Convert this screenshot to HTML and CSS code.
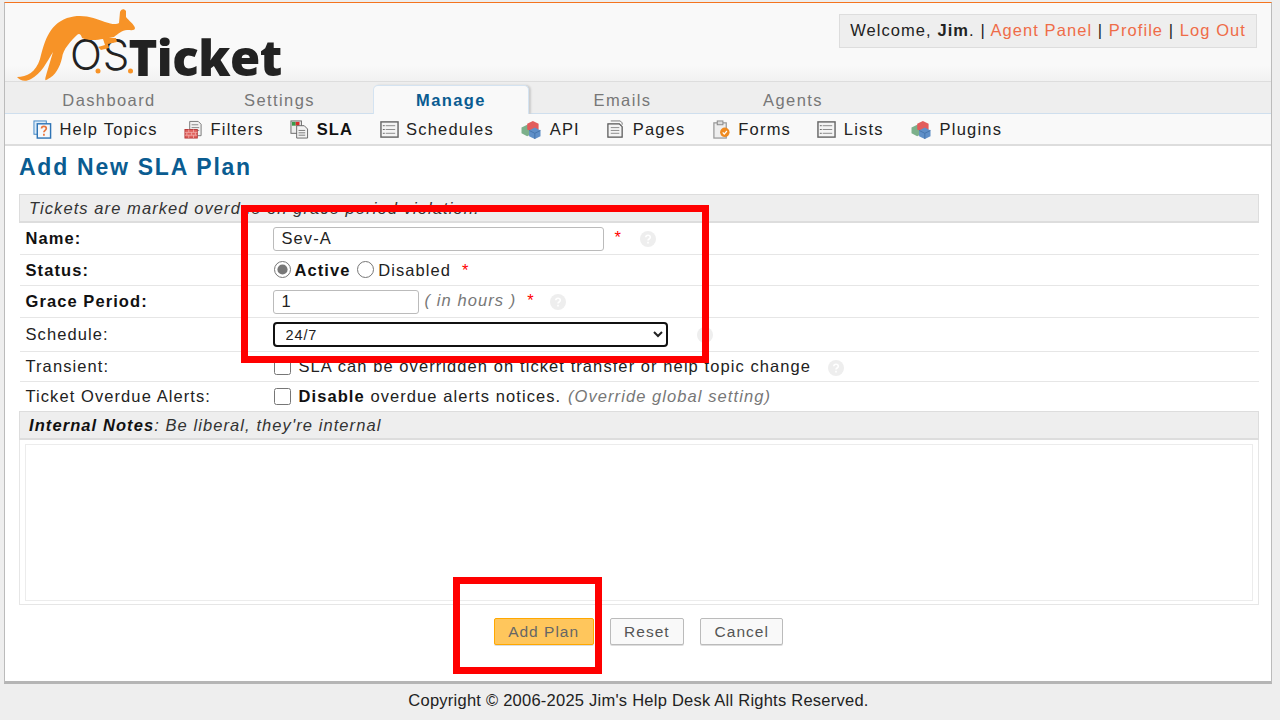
FILE: index.html
```html
<!DOCTYPE html>
<html lang="en">
<head>
	<title>Add New SLA Plan</title>
	<meta charset="utf-8">
	<link rel="stylesheet" href="styles.css">
</head>
<body>
	<svg class="defs" width="0" height="0">
		<symbol id="i-help" viewBox="0 0 20 20">
			<rect x="1" y="1" width="13" height="14" fill="#dcebf8" stroke="#3f86c6"/>
			<rect x="4.500" y="4" width="14" height="15" fill="#f4f8fc" stroke="#2f74b5" stroke-width="1.500"/>
			<path d="M9 9c0-3 5-3 5 0 0 2-2.500 2-2.500 4M11.500 14.500v2" fill="none" stroke="#e8743b" stroke-width="1.800"/>
		</symbol>
		<symbol id="i-filter" viewBox="0 0 20 20">
			<path d="M6 1.500h9l3 3v12H6z" fill="#f2f2f2" stroke="#777"/>
			<path d="M8 5h7M8 8h8M8 11h8" stroke="#888"/>
			<rect x="1" y="10" width="13" height="9" fill="#e0605c" stroke="#b53a3a"/>
			<path d="M1 13h13M1 16h13M5 10v3M10 10v3M3 13v3M8 13v3M12 13v3M5 16v3M10 16v3" stroke="#f3b3ae" stroke-width=".8"/>
		</symbol>
		<symbol id="i-sla" viewBox="0 0 20 20">
			<rect x="1" y="1" width="11" height="13" fill="#eee" stroke="#666"/>
			<rect x="2" y="2" width="4" height="4" fill="#3a9a4a"/>
			<rect x="6" y="2" width="4" height="4" fill="#d92b2b"/>
			<path d="M7 6h8l3.500 3.500v9.500H7z" fill="#f2f2f2" stroke="#666"/>
			<path d="M9 11h7M9 13.500h7M9 16h7" stroke="#777"/>
		</symbol>
		<symbol id="i-list" viewBox="0 0 20 20">
			<rect x="1" y="2" width="18" height="16" fill="#f4f4f4" stroke="#666" stroke-width="1.500"/>
			<path d="M6 6h10M6 10h10M6 14h10" stroke="#888"/>
			<path d="M3 6h2M3 10h2M3 14h2" stroke="#666"/>
		</symbol>
		<symbol id="i-cubes" viewBox="0 0 22 20">
			<path d="M1 8l6-3 6 3v6l-6 3-6-3z" fill="#7cb08a"/>
			<path d="M7 4l6-3 6 3v6l-6 3-6-3z" fill="#e25c5c"/>
			<path d="M9 11l6-3 6 3v6l-6 3-6-3z" fill="#5f8fc8"/>
			<path d="M9 11l6 3 6-3M15 14v6" fill="none" stroke="#3f6ea5" stroke-width=".8"/>
		</symbol>
		<symbol id="i-page" viewBox="0 0 20 20">
			<path d="M5 1h10l2 2v2" fill="none" stroke="#777"/>
			<path d="M2 4h12l3 3v11H2z" fill="#f4f4f4" stroke="#555" stroke-width="1.300"/>
			<path d="M5 8h9M5 11h9M5 14h9" stroke="#888"/>
		</symbol>
		<symbol id="i-form" viewBox="0 0 20 20">
			<rect x="2" y="3" width="13" height="16" fill="#eee" stroke="#999" stroke-width="1.300"/>
			<rect x="5.500" y="1" width="6" height="4" fill="#ddd" stroke="#888"/>
			<circle cx="13.500" cy="13" r="5" fill="#ef8a1f"/>
			<path d="M11.300 13l1.600 1.800 2.800-3.200" fill="none" stroke="#fff" stroke-width="1.300"/>
		</symbol>
		<symbol id="i-tip" viewBox="0 0 16 16">
			<circle cx="8" cy="8" r="8" fill="#eee"/>
			<path d="M5.800 6.300c0-2.800 4.500-2.800 4.500 0 0 1.700-2.300 1.700-2.300 3.300M8 10.800v1.800" fill="none" stroke="#fff" stroke-width="1.600"/>
		</symbol>
	</svg>

	<div id="container">
		<div id="header">
			<a class="logo" href="#">
				<span class="logo-os">OS</span><span class="logo-ticket">Ticket</span>
				<svg class="roo" width="135" height="72" viewBox="0 0 135 72">
					<path d="M0 68C10 68 19 63 23 50 27 35 31 16 50 9 65 4 78 9 88 13 94 15 99 16 102 14L103 3C104 0 107-1 109 2L109 8C112 12 117 15 118 19 118 22 114 21 110 21 105 21 101 25 97 28L92 29 99 29 100 33 91 35 92 39 84 41 81 38 88 36 86 30C80 31 72 32 65 29 64 25 62 24 60 26 54 32 46 40 45 49 43 58 38 67 31 70 27 73 28 70 30 63L36 43C30 53 24 65 14 70 9 73 3 72 0 68Z" fill="#f79327"/>
					<circle cx="81" cy="62" r="2.500" fill="#f79327"/>
					<circle cx="113.500" cy="62" r="2.500" fill="#f79327"/>
				</svg>
			</a>
			<p class="info">Welcome, <strong>Jim</strong>. <span class="sep">|</span> <a href="#">Agent Panel</a> | <a href="#">Profile</a> | <a href="#">Log Out</a></p>
		</div>

		<ul id="nav">
			<li>Dashboard</li>
			<li>Settings</li>
			<li class="active">Manage</li>
			<li>Emails</li>
			<li>Agents</li>
		</ul>

		<ul id="sub_nav">
			<li><svg class="ico"><use href="#i-help"/></svg>Help Topics</li>
			<li><svg class="ico"><use href="#i-filter"/></svg>Filters</li>
			<li class="active"><svg class="ico"><use href="#i-sla"/></svg>SLA</li>
			<li><svg class="ico"><use href="#i-list"/></svg>Schedules</li>
			<li><svg class="ico wide"><use href="#i-cubes"/></svg>API</li>
			<li><svg class="ico"><use href="#i-page"/></svg>Pages</li>
			<li><svg class="ico"><use href="#i-form"/></svg>Forms</li>
			<li><svg class="ico"><use href="#i-list"/></svg>Lists</li>
			<li><svg class="ico wide"><use href="#i-cubes"/></svg>Plugins</li>
		</ul>

		<div id="content">
			<h2>Add New SLA Plan</h2>
			<form>
				<table class="form_table">
					<colgroup><col class="col-label"><col></colgroup>
					<tr class="head h-top"><th colspan="2"><em>Tickets are marked overdue on grace period violation.</em></th></tr>
					<tr class="r-name">
						<td class="lbl"><b>Name:</b></td>
						<td><input class="txt name" type="text" value="Sev-A"><span class="req req-name">*</span><svg class="tip"><use href="#i-tip"/></svg></td>
					</tr>
					<tr class="r-status">
						<td class="lbl"><b>Status:</b></td>
						<td><input class="rad" type="radio" name="st" checked><b>Active</b> <input class="rad" type="radio" name="st">Disabled<span class="req">*</span></td>
					</tr>
					<tr class="r-grace">
						<td class="lbl"><b>Grace Period:</b></td>
						<td><input class="txt grace" type="text" value="1"><em class="hint">( in hours )</em><span class="req">*</span><svg class="tip"><use href="#i-tip"/></svg></td>
					</tr>
					<tr class="r-sched">
						<td class="lbl">Schedule:</td>
						<td><select class="sel"><option>24/7</option></select><svg class="tip tip-sel"><use href="#i-tip"/></svg></td>
					</tr>
					<tr class="r-trans">
						<td class="lbl">Transient:</td>
						<td><input class="chk" type="checkbox">SLA can be overridden on ticket transfer or help topic change<svg class="tip"><use href="#i-tip"/></svg></td>
					</tr>
					<tr class="r-alert">
						<td class="lbl">Ticket Overdue Alerts:</td>
						<td><input class="chk" type="checkbox"><b>Disable</b> overdue alerts notices. <em class="hint">(Override global setting)</em></td>
					</tr>
					<tr class="head h-notes"><th colspan="2"><em><b>Internal Notes</b>: Be liberal, they're internal</em></th></tr>
					<tr class="r-notes"><td colspan="2"><div class="notes"></div></td></tr>
				</table>
				<p class="buttons">
					<button class="btn primary" type="button">Add Plan</button>
					<button class="btn" type="button">Reset</button>
					<button class="btn" type="button">Cancel</button>
				</p>
			</form>
		</div>
	</div>

	<div id="footer">Copyright © 2006-2025 Jim's Help Desk All Rights Reserved.</div>

	<div class="mark mark-form"></div>
	<div class="mark mark-btn"></div>
</body>
</html>
```

FILE: styles.css
```css
html { height: 100%; }
body { margin: 0; height: 720px; overflow: hidden; position: relative; background: #eee; font-family: "Liberation Sans", Arial, sans-serif; font-size: 16.500px; letter-spacing: 1.050px; color: #222; }
a { color: #ef6c48; text-decoration: none; }
ul { list-style: none; margin: 0; padding: 0; }
.defs { position: absolute; }

#container { margin: 2px 8px 0 4px; height: 678px; background: #fff; border-top: 1px solid #f4741f; border-left: 1px solid #bbb; border-right: 1px solid #bbb; border-bottom: 3px solid #b5b5b5; display: flex; flex-direction: column; }

#header { height: 78px; flex: none; display: flex; justify-content: space-between; background: linear-gradient(#f9f9f9 80%, #f1f1f1); border-bottom: 1px solid #ddd; }
.logo { display: flex; align-items: flex-end; position: relative; height: 72px; margin-left: 12px; padding-left: 53px; width: 215px; margin-top: 3px; color: #222; letter-spacing: 0; }
.roo { position: absolute; left: 0; top: 3px; }
.logo-os { font-family: Inter, sans-serif; font-size: 42px; font-weight: 300; line-height: 46px; letter-spacing: 1px; color: #222; }
.logo-ticket { font-family: "Open Sans", sans-serif; font-size: 49px; font-weight: 800; line-height: 56px; letter-spacing: -.5px; color: #222; margin-left: -2px; position: relative; top: 7px; }
.info { margin: 11px 14px 0 0; height: 32px; line-height: 30px; padding: 0 10px 0 10px; background: #eee; border: 1px solid #ddd; white-space: nowrap; letter-spacing: 1.070px; }

#nav { height: 31px; flex: none; display: flex; gap: 16.500px; padding-left: 27px; background: #eee; border-bottom: 1px solid #cfdfee; letter-spacing: 1.400px; }
#nav li { width: 154px; text-align: center; line-height: 37px; color: #777; height: 31px; }
#nav .active { height: 28px; margin-top: 3px; line-height: 29px; background: #f9f9f9; border: 1px solid #d4e3f1; border-bottom: 0; border-radius: 5px 5px 0 0; color: #0a5c91; font-weight: bold; box-shadow: 2px 0 2px #ccc; }

#sub_nav { height: 30px; flex: none; display: flex; padding-left: 28px; background: #f9f9f9; border-bottom: 2px solid #ddd; line-height: 30px; letter-spacing: 1.200px; }
#sub_nav li { display: flex; align-items: center; margin-right: 26.300px; }
#sub_nav .active { font-weight: bold; color: #111; }
.ico { width: 19px; height: 19px; margin-right: 7.500px; flex: none; }
.ico.wide { width: 22px; }

#content { flex: 1; padding: 0 13px 0 14px; }
h2 { margin: 8px 0 14px; font-size: 23px; line-height: 26px; letter-spacing: 1.750px; color: #0a5c91; }

.form_table { width: 1240px; border-collapse: collapse; table-layout: fixed; letter-spacing: 1.080px; }
.col-label { width: 253px; }
.form_table td { padding: 0 0 0 6px; border-top: 1px solid #e6e6e6; white-space: nowrap; }
.form_table tr > td:last-child:not(:first-child) { padding-left: 0; }
.form_table b { color: #111; }
.head th { text-align: left; font-weight: normal; padding: 0 0 0 9px; background: #eee; border: 1px solid #ddd; border-width: 1px 1px 2px; color: #333; }
.h-top th { height: 26px; }
.h-notes th { height: 26px; }
.r-name td { height: 31px; }
.r-status td { height: 30px; }
.r-grace td { height: 31px; }
.r-sched td { height: 33px; }
.r-trans td { height: 29px; }
.r-alert td { height: 29px; }
.r-notes td { height: 164px; border: 1px solid #e6e6e6; padding: 0 5px; border-top: 0; }

.txt { font: inherit; letter-spacing: inherit; box-sizing: border-box; height: 24px; padding: 0 8px; border: 1px solid #bbb; border-radius: 3px; background: #fff; color: #222; vertical-align: middle; }
.txt.name { width: 331px; }
.txt.grace { width: 146px; }
.req { color: #f00; margin-left: 11px; }
.hint { color: #777; margin-left: 6px; }
.r-alert .hint { margin-left: 1px; }
.tip { width: 16px; height: 16px; margin-left: 18px; vertical-align: middle; }
.tip-sel { margin-left: 29px; }
.r-grace .tip { margin-left: 15px; }
.r-trans .tip { margin-left: 17px; }
.rad { width: 17px; height: 17px; margin: 0 4px 0 1px; vertical-align: -2px; accent-color: #777; }
.chk { width: 17px; height: 17px; margin: 0 8px 0 1px; vertical-align: -3px; }
.sel { width: 395px; height: 25px; box-sizing: border-box; font: inherit; font-size: 14.500px; letter-spacing: .900px; padding: 0 7px; border: 2px solid #111; border-radius: 4px; background: #fff; color: #222; vertical-align: middle; }
.notes { height: 155px; border: 1px solid #ececec; }

.buttons { margin: 13px 0 0; display: flex; justify-content: center; gap: 16px; }
.btn { font: inherit; font-size: 15.500px; letter-spacing: 1px; height: 27px; padding: 0 13.500px; background: #f9f9f9; border: 1px solid #bbb; border-radius: 2px; color: #555; box-shadow: 0 1px 0 #ddd; }
.btn.primary { background: #ffc65c; border: 1px solid #ffa800; color: #666; }

#footer { text-align: center; margin-top: 8px; padding-right: 3px; line-height: 17px; color: #222; letter-spacing: .240px; }

.mark { position: absolute; box-sizing: border-box; border: 7px solid #f00; }
.mark-form { left: 241px; top: 205px; width: 468px; height: 158px; }
.mark-btn { left: 453px; top: 577px; width: 149px; height: 97px; }
```
